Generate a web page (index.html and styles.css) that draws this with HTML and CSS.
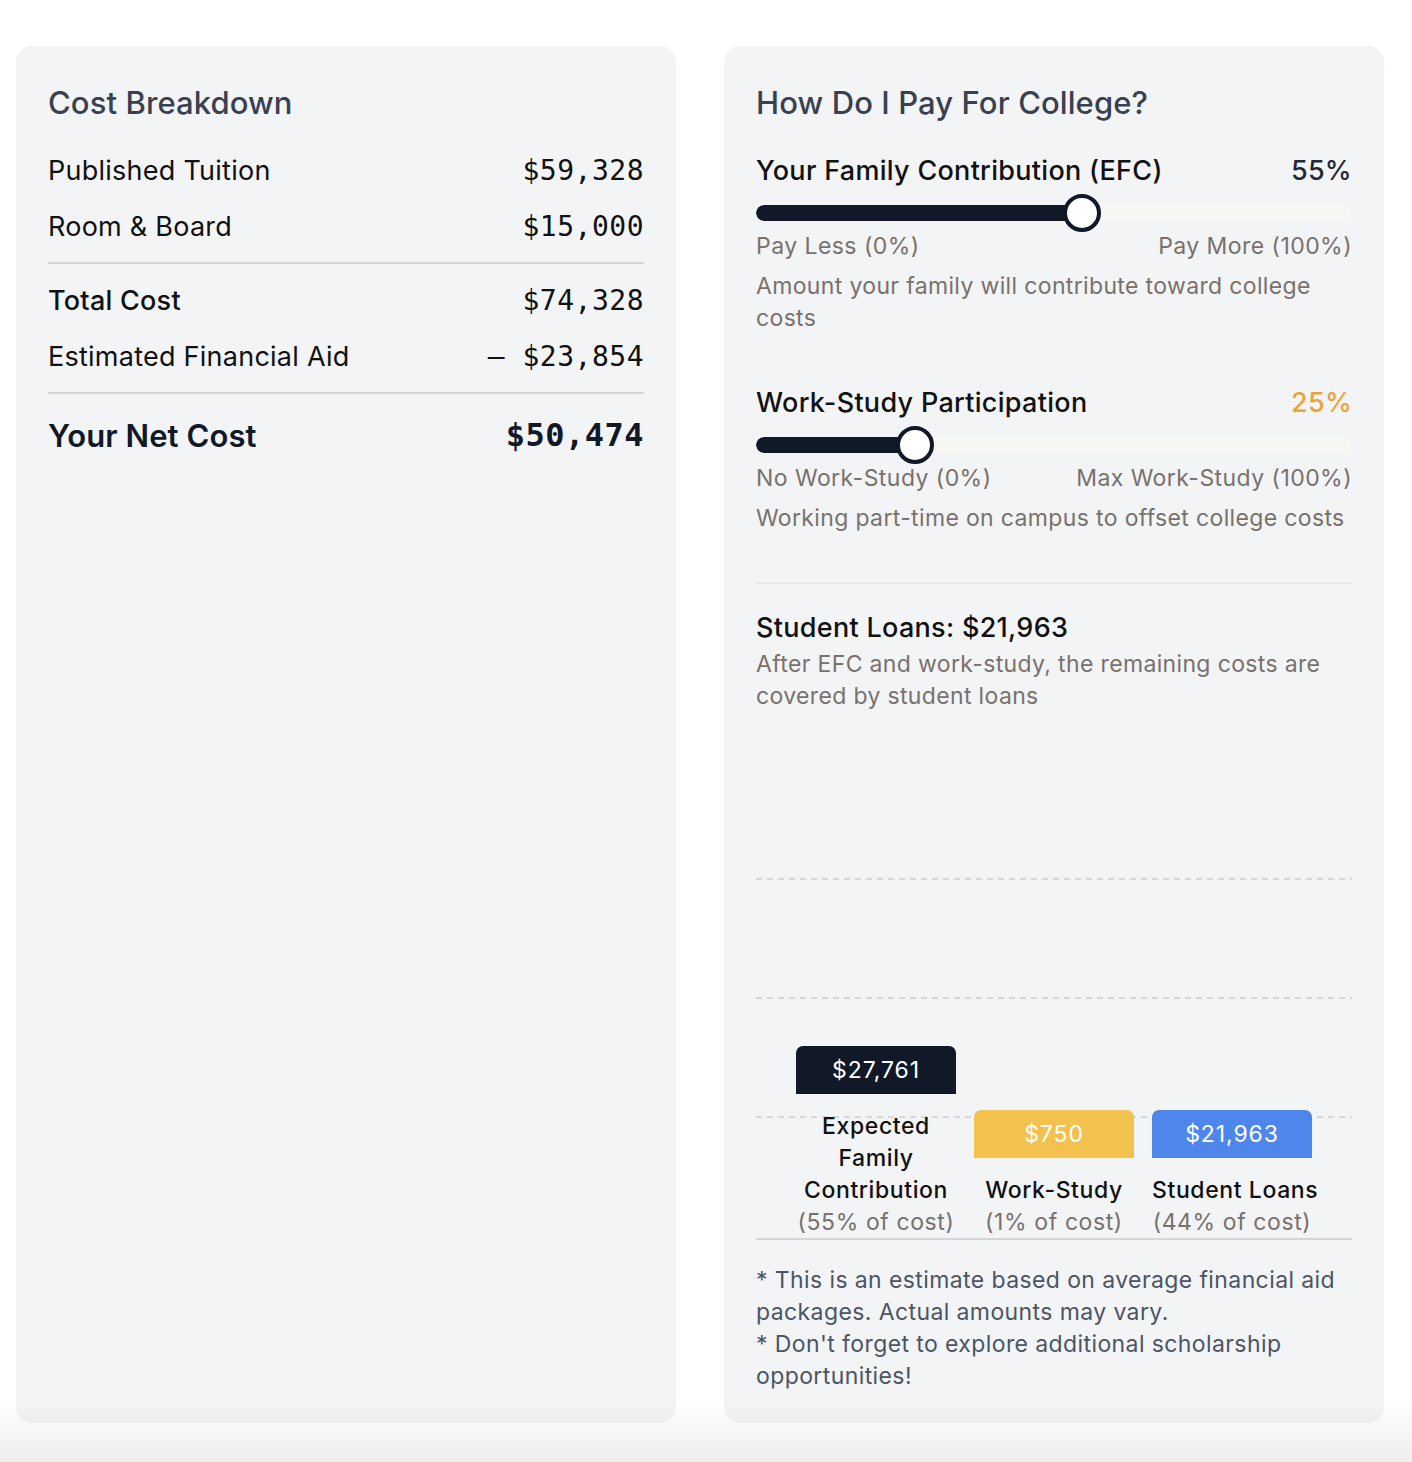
FILE: index.html
```html
<!DOCTYPE html>
<html lang="en">
<head>
<meta charset="utf-8">
<title>College Cost</title>
<link rel="stylesheet" href="styles.css">
</head>
<body>
<div class="page">
  <section class="panel">
    <h2 class="panel-title">Cost Breakdown</h2>
    <div class="row"><span>Published Tuition</span><span class="num">$59,328</span></div>
    <div class="row"><span>Room &amp; Board</span><span class="num">$15,000</span></div>
    <hr class="rule">
    <div class="row strong"><span>Total Cost</span><span class="num">$74,328</span></div>
    <div class="row"><span>Estimated Financial Aid</span><span class="num">&ndash; $23,854</span></div>
    <hr class="rule">
    <div class="row net"><span>Your Net Cost</span><span class="num">$50,474</span></div>
  </section>

  <section class="panel">
    <h2 class="panel-title">How Do I Pay For College?</h2>

    <div class="control">
      <div class="control-head"><span>Your Family Contribution (EFC)</span><span class="pct pct-dark">55%</span></div>
      <div class="slider" style="--p:0.55">
        <div class="track"><div class="fill"></div></div>
        <div class="thumb"></div>
      </div>
      <div class="ends"><span>Pay Less (0%)</span><span>Pay More (100%)</span></div>
      <p class="hint">Amount your family will contribute toward college costs</p>
    </div>

    <div class="control second">
      <div class="control-head"><span>Work-Study Participation</span><span class="pct pct-amber">25%</span></div>
      <div class="slider" style="--p:0.25">
        <div class="track"><div class="fill"></div></div>
        <div class="thumb"></div>
      </div>
      <div class="ends"><span>No Work-Study (0%)</span><span>Max Work-Study (100%)</span></div>
      <p class="hint">Working part-time on campus to offset college costs</p>
    </div>

    <div class="loans">
      <h3 class="loans-title">Student Loans: $21,963</h3>
      <p class="hint">After EFC and work-study, the remaining costs are covered by student loans</p>
    </div>

    <div class="chart">
      <div class="gridline g1"></div>
      <div class="gridline g2"></div>
      <div class="gridline g3"></div>
      <div class="col">
        <div class="bar bar-dark">$27,761</div>
        <div class="col-label">Expected<br>Family<br>Contribution</div>
        <div class="col-pct">(55% of cost)</div>
      </div>
      <div class="col">
        <div class="bar bar-yellow">$750</div>
        <div class="col-label">Work-Study</div>
        <div class="col-pct">(1% of cost)</div>
      </div>
      <div class="col">
        <div class="bar bar-blue">$21,963</div>
        <div class="col-label">Student Loans</div>
        <div class="col-pct">(44% of cost)</div>
      </div>
    </div>

    <div class="notes">
      <p>* This is an estimate based on average financial aid packages. Actual amounts may vary.</p>
      <p>* Don't forget to explore additional scholarship opportunities!</p>
    </div>
  </section>
</div>
<div class="fade"></div>
</body>
</html>
```

FILE: styles.css
```css
* { box-sizing: border-box; }

html, body {
  margin: 0;
  padding: 0;
  background: #ffffff;
}

body {
  font-family: Inter, "Noto Sans", "Liberation Sans", sans-serif;
  color: #111111;
  height: 1462px;
  overflow: hidden;
}

.page {
  display: grid;
  grid-template-columns: 660px 660px;
  column-gap: 48px;
  padding: 46px 0 0 16px;
}

.panel {
  background: #f3f4f6;
  border-radius: 16px;
  padding: 32px;
  height: 1377px;
}

.panel-title {
  margin: 0 0 14px;
  font-size: 31px;
  line-height: 50px;
  font-weight: 500;
  color: #374151;
  letter-spacing: 0.1px;
}

.row {
  display: flex;
  justify-content: space-between;
  align-items: center;
  height: 56px;
  font-size: 27px;
  letter-spacing: 0.25px;
  color: #111111;
}

.row.strong span:first-child { font-weight: 500; }

.num {
  font-family: "DejaVu Sans Mono", "Liberation Mono", monospace;
  font-size: 28px;
  letter-spacing: 0.5px;
}

.row.net {
  height: 66px;
  font-size: 31px;
  font-weight: 600;
  letter-spacing: 0.1px;
  color: #111827;
}

.row.net .num {
  font-size: 32px;
  font-weight: 700;
  letter-spacing: 0.5px;
}

.rule {
  border: 0;
  height: 2px;
  background: #d4d5d9;
  margin: 8px 0;
}

/* sliders */
.control-head {
  display: flex;
  justify-content: space-between;
  align-items: center;
  height: 56px;
  font-size: 27px;
  letter-spacing: 0.3px;
  font-weight: 500;
  color: #111111;
}

.pct-dark { color: #1f2937; }
.pct-amber { color: #eea33a; }

.slider {
  position: relative;
  height: 36px;
  margin-top: -3px;
}

.track {
  position: absolute;
  left: 0;
  right: 0;
  top: 10px;
  height: 16px;
  border-radius: 8px;
  background: #f6f6f3;
  overflow: hidden;
}

.fill {
  height: 100%;
  width: calc(19px + var(--p) * (100% - 38px));
  background: #111827;
  border-radius: 8px 0 0 8px;
}

.thumb {
  position: absolute;
  top: -1px;
  left: calc(var(--p) * (100% - 38px));
  width: 38px;
  height: 38px;
  border-radius: 50%;
  background: #ffffff;
  border: 4px solid #111827;
}

.ends {
  display: flex;
  justify-content: space-between;
  font-size: 23px;
  line-height: 32px;
  color: #78716c;
  margin-top: -1px;
  letter-spacing: 0.45px;
}

.hint {
  margin: 8px 0 0;
  font-size: 23px;
  line-height: 32px;
  color: #78716c;
  letter-spacing: 0.35px;
}

.control.second { margin-top: 40px; }

.control.second .hint {
  padding-bottom: 48px;
  border-bottom: 2px solid #e5e7eb;
}

.loans { margin-top: 26px; }

.loans-title {
  margin: 0;
  font-size: 27px;
  line-height: 36px;
  font-weight: 500;
  letter-spacing: 0.3px;
  color: #111111;
}

.loans .hint { margin-top: 2px; }

/* chart */
.chart {
  position: relative;
  height: 480px;
  margin-top: 48px;
  border-bottom: 2px solid #d4d5d9;
  display: flex;
  align-items: flex-end;
  justify-content: space-between;
  padding: 0 40px;
}

.gridline {
  position: absolute;
  left: 0;
  right: 0;
  height: 2px;
  background: repeating-linear-gradient(to right, #d5d7dc 0 6px, transparent 6px 11px);
}

.g1 { top: 118px; }
.g2 { top: 237px; }
.g3 { top: 356px; }

.col {
  position: relative;
  width: 160px;
  text-align: center;
}

.bar {
  height: 48px;
  line-height: 48px;
  border-radius: 7px 7px 0 0;
  color: #ffffff;
  font-size: 23px;
  letter-spacing: 0.9px;
}

.bar-dark { background: #111827; }
.bar-yellow { background: #f2c14e; }
.bar-blue { background: #4f86ec; }

.col-label {
  margin-top: 16px;
  font-size: 23px;
  line-height: 32px;
  font-weight: 500;
  color: #111111;
  white-space: nowrap;
  letter-spacing: 0.6px;
}

.col-pct {
  font-size: 23px;
  line-height: 32px;
  color: #78716c;
  white-space: nowrap;
  letter-spacing: 0.6px;
}

.notes {
  margin-top: 24px;
  font-size: 23px;
  line-height: 32px;
  color: #4b5563;
  letter-spacing: 0.4px;
}

.notes p { margin: 0; }

.fade {
  position: fixed;
  left: 0;
  right: 0;
  bottom: 0;
  height: 60px;
  background: linear-gradient(to bottom, rgba(0, 0, 0, 0), rgba(0, 0, 0, 0.065));
  pointer-events: none;
}
```
